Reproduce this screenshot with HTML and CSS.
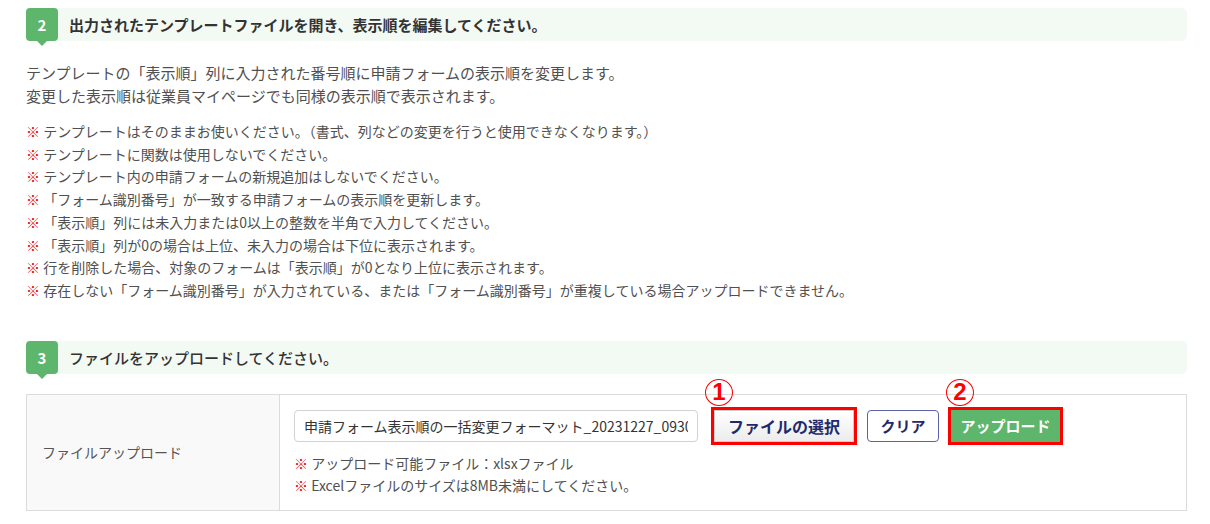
FILE: index.html
```html
<!DOCTYPE html>
<html lang="ja">
<head>
<meta charset="utf-8">
<title>表示順の一括変更</title>
<link rel="stylesheet" href="styles.css">
</head>
<body>
<div class="page">
  <section class="step">
    <div class="step-head">
      <span class="badge">2</span>
      <h2 class="step-title">出力されたテンプレートファイルを開き、表示順を編集してください。</h2>
    </div>
    <p class="lead">テンプレートの「表示順」列に入力された番号順に申請フォームの表示順を変更します。<br>変更した表示順は従業員マイページでも同様の表示順で表示されます。</p>
    <ul class="notes">
      <li><span class="kome">※</span> テンプレートはそのままお使いください。（書式、列などの変更を行うと使用できなくなります。）</li>
      <li><span class="kome">※</span> テンプレートに関数は使用しないでください。</li>
      <li><span class="kome">※</span> テンプレート内の申請フォームの新規追加はしないでください。</li>
      <li><span class="kome">※</span> 「フォーム識別番号」が一致する申請フォームの表示順を更新します。</li>
      <li><span class="kome">※</span> 「表示順」列には未入力または0以上の整数を半角で入力してください。</li>
      <li><span class="kome">※</span> 「表示順」列が0の場合は上位、未入力の場合は下位に表示されます。</li>
      <li><span class="kome">※</span> 行を削除した場合、対象のフォームは「表示順」が0となり上位に表示されます。</li>
      <li><span class="kome">※</span> 存在しない「フォーム識別番号」が入力されている、または「フォーム識別番号」が重複している場合アップロードできません。</li>
    </ul>
  </section>

  <section class="step step-upload">
    <div class="step-head">
      <span class="badge">3</span>
      <h2 class="step-title step-title-normal">ファイルをアップロードしてください。</h2>
    </div>
    <div class="form-table">
      <div class="form-label">ファイルアップロード</div>
      <div class="form-field">
        <div class="field-row">
          <input class="file-name" type="text" readonly value="申請フォーム表示順の一括変更フォーマット_20231227_093015.xlsx">
          <div class="btn-wrap">
            <span class="marker">1</span>
            <button class="btn btn-select">ファイルの選択</button>
          </div>
          <button class="btn btn-clear">クリア</button>
          <div class="btn-wrap">
            <span class="marker">2</span>
            <button class="btn btn-upload">アップロード</button>
          </div>
        </div>
        <ul class="notes field-notes">
          <li><span class="kome">※</span> アップロード可能ファイル：xlsxファイル</li>
          <li><span class="kome">※</span> Excelファイルのサイズは8MB未満にしてください。</li>
        </ul>
      </div>
    </div>
  </section>
</div>
</body>
</html>
```

FILE: styles.css
```css
* { box-sizing: border-box; }

html, body {
  margin: 0;
  padding: 0;
  background: #fff;
}

body {
  font-family: "Noto Sans CJK JP", "Noto Sans", sans-serif;
  color: #4d4d4d;
}

.page {
  width: 1161px;
  margin-left: 26px;
  padding-top: 8px;
}

.step-head {
  display: flex;
  align-items: center;
  height: 33px;
  background: #f3f9f3;
  border-radius: 5px;
}

.badge {
  position: relative;
  width: 32px;
  height: 33px;
  flex: none;
  display: flex;
  align-items: center;
  justify-content: center;
  background: #5db66c;
  color: #fff;
  font-weight: bold;
  font-size: 15px;
  border-radius: 4px;
}

.badge::after {
  content: "";
  position: absolute;
  left: 11px;
  bottom: -5px;
  border-left: 5px solid transparent;
  border-right: 5px solid transparent;
  border-top: 5px solid #5db66c;
}

.step-title {
  margin: 0 0 0 11px;
  font-size: 15px;
  font-weight: bold;
  color: #333;
  line-height: 33px;
}

.step-title-normal {
  font-weight: 500;
}

.lead {
  margin: 21px 0 0;
  font-size: 15px;
  line-height: 22.5px;
  color: #505050;
}

.notes {
  list-style: none;
  margin: 13px 0 0;
  padding: 0;
  font-size: 14px;
  line-height: 22.7px;
  color: #505050;
}

.kome {
  color: #e8000f;
  font-weight: bold;
}

.step-upload {
  margin-top: 39px;
}

.form-table {
  display: grid;
  grid-template-columns: 253px 1fr;
  margin-top: 20px;
  border: 1px solid #dcdcdc;
}

.form-label {
  display: flex;
  align-items: center;
  padding-left: 15px;
  background: #f9f9f9;
  border-right: 1px solid #dcdcdc;
  font-size: 14px;
  color: #555;
}

.form-field {
  padding: 15px 14px 14px;
}

.field-row {
  display: flex;
  align-items: center;
  height: 32px;
}

.file-name {
  width: 404px;
  height: 32px;
  margin: 0;
  padding: 0 9px;
  border: 1px solid #d2d2d2;
  border-radius: 4px;
  background: #fff;
  font-family: inherit;
  font-size: 14px;
  color: #333;
  outline: none;
}

.btn-wrap {
  position: relative;
  display: flex;
}

.marker {
  position: absolute;
  left: 7px;
  top: -31px;
  width: 28px;
  height: 27px;
  border: 1.5px solid #f00;
  border-radius: 50%;
  display: flex;
  align-items: center;
  justify-content: center;
  color: #f00;
  font-weight: bold;
  font-size: 24px;
  line-height: 1;
  font-family: "Liberation Sans", "Noto Sans", sans-serif;
}

.btn {
  height: 32px;
  margin: 0;
  padding: 0;
  font-family: inherit;
  font-weight: bold;
  cursor: pointer;
}

.btn-select {
  width: 140px;
  margin-left: 16px;
  border: 1px solid #ccc;
  background: linear-gradient(#ffffff, #ececec);
  color: #1f2a6c;
  font-size: 16px;
  outline: 3px solid #f00;
}

.btn-clear {
  width: 72px;
  margin-left: 13px;
  border: 1px solid #5d62a8;
  border-radius: 4px;
  background: #fff;
  color: #1f2a6c;
  font-size: 15px;
}

.btn-upload {
  width: 109px;
  margin-left: 12px;
  border: none;
  background: #5db66c;
  color: #fff;
  font-size: 15px;
  outline: 3px solid #f00;
}

.field-notes {
  margin-top: 10px;
  line-height: 22px;
}
```
